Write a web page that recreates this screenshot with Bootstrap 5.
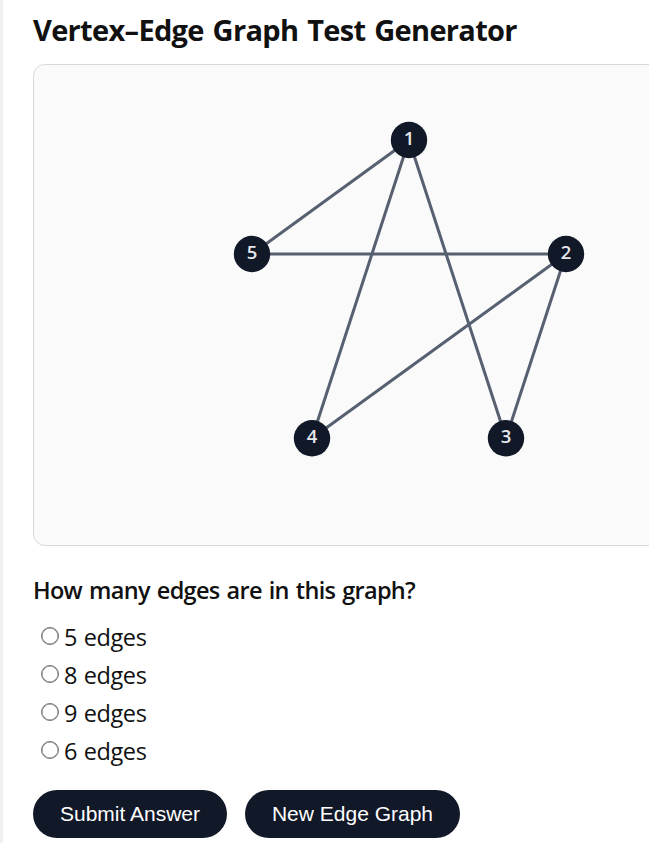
<!DOCTYPE html>
<html lang="en">
<head>
    <meta charset="UTF-8">
    <meta name="viewport" content="width=device-width, initial-scale=1.0">
    <title>Vertex–Edge Graph Test Generator</title>
    <link href="https://cdn.jsdelivr.net/npm/bootstrap@5.3.3/dist/css/bootstrap.min.css" rel="stylesheet">
    <script src="https://cdn.jsdelivr.net/npm/bootstrap@5.3.3/dist/js/bootstrap.bundle.min.js"></script>
    <style>
        body {
            background-color: #f0f0f3;
            color: #111;
            font-family: "Segoe UI", "Open Sans", sans-serif;
            height: 100vh;
            padding-left: 3px;
        }
        .panel {
            height: 843px;
            padding: 10px 0 0 30px;
        }
        .title {
            font-size: 29px;
            font-weight: 700;
            line-height: 40px;
            letter-spacing: -0.68px;
            word-spacing: 2px;
            margin-bottom: 14px;
        }
        .graph-box {
            width: 752px;
            height: 482px;
            background-color: #fafafa;
            border: 1px solid #d9d9d9;
            border-radius: 12px;
        }
        .question {
            font-size: 23.5px;
            font-weight: 600;
            line-height: 32px;
            letter-spacing: -0.7px;
            word-spacing: 1.6px;
            margin: 28px 0 13px;
        }
        .answer {
            height: 38px;
            padding-left: 8px;
            font-size: 23.5px;
            line-height: 37px;
            letter-spacing: -0.4px;
            word-spacing: 1px;
        }
        .answer input {
            appearance: none;
            width: 18px;
            height: 18px;
            margin: 8px 5px 0 0;
            border: 1px solid #767676;
            border-radius: 50%;
            background-color: #fff;
            box-shadow: inset 0 0 0 0.5px #767676;
        }
        .answer input:checked {
            border: 5px solid #111827;
        }
        .actions {
            gap: 18px;
            padding-top: 19px;
        }
        .action {
            height: 48px;
            border: 0;
            border-radius: 24px;
            background-color: #111827;
            color: #fff;
            font-family: Arial, "Liberation Sans", sans-serif;
            font-size: 21px;
        }
        .action-submit {
            width: 194px;
        }
        .action-new {
            width: 215px;
        }
    </style>
</head>
<body>
    <main class="panel bg-white overflow-hidden">
        <h1 class="title text-nowrap">Vertex–Edge Graph Test Generator</h1>
        <div class="graph-box">
            <svg class="d-block" width="750" height="480" viewBox="0 0 750 480">
                <g stroke="#566070" stroke-width="3">
                    <line x1="375" y1="75" x2="218" y2="189"/>
                    <line x1="375" y1="75" x2="278" y2="373.3"/>
                    <line x1="375" y1="75" x2="472" y2="373.3"/>
                    <line x1="218" y1="189" x2="532" y2="189"/>
                    <line x1="532" y1="189" x2="278" y2="373.3"/>
                    <line x1="532" y1="189" x2="472" y2="373.3"/>
                </g>
                <g fill="#111827">
                    <circle cx="375" cy="75" r="18.2"/>
                    <circle cx="532" cy="189" r="18.2"/>
                    <circle cx="472" cy="373.3" r="18.2"/>
                    <circle cx="278" cy="373.3" r="18.2"/>
                    <circle cx="218" cy="189" r="18.2"/>
                </g>
                <g fill="#e5e7eb" font-size="18.5" font-weight="600" text-anchor="middle">
                    <text x="375" y="79.5">1</text>
                    <text x="532" y="193.5">2</text>
                    <text x="472" y="377.5">3</text>
                    <text x="278" y="377.5">4</text>
                    <text x="218" y="193.5">5</text>
                </g>
            </svg>
        </div>
        <h2 class="question text-nowrap">How many edges are in this graph?</h2>
        <form>
            <label class="answer d-flex align-items-start"><input type="radio" name="edges" value="5"><span>5 edges</span></label>
            <label class="answer d-flex align-items-start"><input type="radio" name="edges" value="8"><span>8 edges</span></label>
            <label class="answer d-flex align-items-start"><input type="radio" name="edges" value="9"><span>9 edges</span></label>
            <label class="answer d-flex align-items-start"><input type="radio" name="edges" value="6"><span>6 edges</span></label>
            <div class="actions d-flex">
                <button type="button" class="action action-submit p-0 text-nowrap">Submit Answer</button>
                <button type="button" class="action action-new p-0 text-nowrap">New Edge Graph</button>
            </div>
        </form>
    </main>
</body>
</html>
